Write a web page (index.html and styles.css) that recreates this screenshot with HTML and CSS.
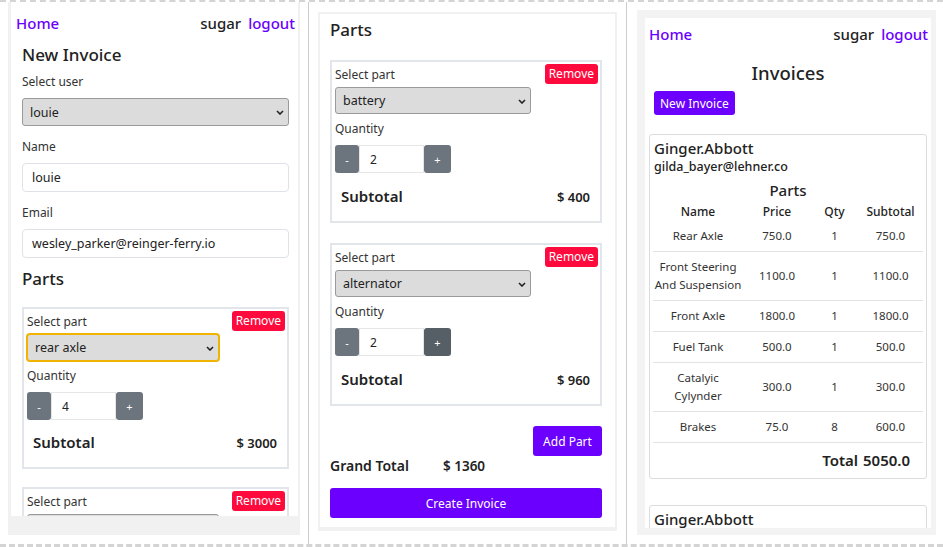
FILE: index.html
```html
<!DOCTYPE html>
<html lang="en">
<head>
<meta charset="utf-8">
<title>Invoices</title>
<link rel="stylesheet" href="styles.css">
</head>
<body>
<div class="page">

  <section class="shot shot-new">
    <div class="frame frame-new">
      <div class="screen">
        <nav class="topnav topnav-new">
          <a class="nav-link" href="#">Home</a>
          <span class="nav-user"><span class="username">sugar</span><a class="nav-link" href="#">logout</a></span>
        </nav>
        <div class="form">
          <h2 class="title">New Invoice</h2>
          <div class="field">
            <label class="field-label">Select user</label>
            <div class="select-wrap">
              <select class="select"><option>louie</option></select>
              <svg class="chevron" width="8" height="5" viewBox="0 0 8 5"><polyline points="1,1 4,4 7,1" fill="none" stroke="#222" stroke-width="1.6"/></svg>
            </div>
          </div>
          <div class="field">
            <label class="field-label">Name</label>
            <input class="text-input" value="louie">
          </div>
          <div class="field">
            <label class="field-label">Email</label>
            <input class="text-input" value="wesley_parker@reinger-ferry.io">
          </div>
          <h3 class="section-title section-title-new">Parts</h3>

          <div class="part">
            <div class="part-head"><span class="part-label">Select part</span><button class="btn-remove">Remove</button></div>
            <div class="select-wrap part-select is-focused">
              <select class="select"><option>rear axle</option></select>
              <svg class="chevron" width="8" height="5" viewBox="0 0 8 5"><polyline points="1,1 4,4 7,1" fill="none" stroke="#222" stroke-width="1.6"/></svg>
            </div>
            <span class="qty-label">Quantity</span>
            <div class="qty"><button class="qty-btn">-</button><input class="qty-input" value="4"><button class="qty-btn qty-plus">+</button></div>
            <div class="subtotal"><span class="subtotal-label">Subtotal</span><span class="subtotal-value">$ 3000</span></div>
          </div>

          <div class="part">
            <div class="part-head"><span class="part-label">Select part</span><button class="btn-remove">Remove</button></div>
            <div class="select-wrap part-select">
              <select class="select"><option>battery</option></select>
              <svg class="chevron" width="8" height="5" viewBox="0 0 8 5"><polyline points="1,1 4,4 7,1" fill="none" stroke="#222" stroke-width="1.6"/></svg>
            </div>
          </div>
        </div>
      </div>
    </div>
  </section>

  <div class="divider"></div>

  <section class="shot shot-parts">
    <div class="frame frame-parts">
      <div class="screen parts-page">
        <h3 class="section-title">Parts</h3>

        <div class="part">
          <div class="part-head"><span class="part-label">Select part</span><button class="btn-remove">Remove</button></div>
          <div class="select-wrap part-select">
            <select class="select"><option>battery</option></select>
            <svg class="chevron" width="8" height="5" viewBox="0 0 8 5"><polyline points="1,1 4,4 7,1" fill="none" stroke="#222" stroke-width="1.6"/></svg>
          </div>
          <span class="qty-label">Quantity</span>
          <div class="qty"><button class="qty-btn">-</button><input class="qty-input" value="2"><button class="qty-btn qty-plus">+</button></div>
          <div class="subtotal"><span class="subtotal-label">Subtotal</span><span class="subtotal-value">$ 400</span></div>
        </div>

        <div class="part">
          <div class="part-head"><span class="part-label">Select part</span><button class="btn-remove">Remove</button></div>
          <div class="select-wrap part-select">
            <select class="select"><option>alternator</option></select>
            <svg class="chevron" width="8" height="5" viewBox="0 0 8 5"><polyline points="1,1 4,4 7,1" fill="none" stroke="#222" stroke-width="1.6"/></svg>
          </div>
          <span class="qty-label">Quantity</span>
          <div class="qty"><button class="qty-btn">-</button><input class="qty-input" value="2"><button class="qty-btn qty-plus is-hover">+</button></div>
          <div class="subtotal"><span class="subtotal-label">Subtotal</span><span class="subtotal-value">$ 960</span></div>
        </div>

        <div class="actions"><button class="btn-primary btn-add">Add Part</button></div>
        <div class="grand"><span class="grand-label">Grand Total</span><span class="grand-value">$ 1360</span></div>
        <button class="btn-primary btn-create">Create Invoice</button>
      </div>
    </div>
  </section>

  <div class="divider"></div>

  <section class="shot shot-list">
    <div class="frame frame-list">
      <div class="screen">
        <nav class="topnav topnav-list">
          <a class="nav-link" href="#">Home</a>
          <span class="nav-user"><span class="username">sugar</span><a class="nav-link" href="#">logout</a></span>
        </nav>
        <div class="list-page">
          <h2 class="list-title">Invoices</h2>
          <button class="btn-primary btn-new">New Invoice</button>

          <article class="invoice">
            <div class="customer">Ginger.Abbott</div>
            <div class="customer-email">gilda_bayer@lehner.co</div>
            <div class="invoice-parts">Parts</div>
            <table class="parts-table">
              <colgroup><col class="col-name"><col class="col-price"><col class="col-qty"><col class="col-sub"></colgroup>
              <thead>
                <tr><th>Name</th><th>Price</th><th>Qty</th><th>Subtotal</th></tr>
              </thead>
              <tbody>
                <tr><td>Rear Axle</td><td>750.0</td><td>1</td><td>750.0</td></tr>
                <tr><td>Front Steering And Suspension</td><td>1100.0</td><td>1</td><td>1100.0</td></tr>
                <tr><td>Front Axle</td><td>1800.0</td><td>1</td><td>1800.0</td></tr>
                <tr><td>Fuel Tank</td><td>500.0</td><td>1</td><td>500.0</td></tr>
                <tr><td>Catalyic Cylynder</td><td>300.0</td><td>1</td><td>300.0</td></tr>
                <tr><td>Brakes</td><td>75.0</td><td>8</td><td>600.0</td></tr>
              </tbody>
              <tfoot>
                <tr><td class="total-label" colspan="3">Total</td><td class="total-value">5050.0</td></tr>
              </tfoot>
            </table>
          </article>

          <article class="invoice invoice-peek">
            <div class="customer">Ginger.Abbott</div>
          </article>
        </div>
      </div>
    </div>
  </section>

</div>
</body>
</html>
```
FILE: styles.css
```css
* { box-sizing: border-box; }

html, body { margin: 0; padding: 0; }

body {
  width: 943px;
  height: 547px;
  overflow: hidden;
  background: #fff;
  font-family: "Noto Sans", "DejaVu Sans", sans-serif;
  color: #212529;
}

button, input, select { font-family: inherit; margin: 0; }

.page {
  display: flex;
  height: 547px;
  border-top: 2px dashed #d4d4d4;
  border-bottom: 3px dashed #d4d4d4;
}

.shot { flex: none; height: 542px; overflow: hidden; }
.shot-new { width: 308px; padding-left: 8px; }
.shot-parts { width: 317px; padding: 10px 0 0 9px; }
.shot-list { width: 316px; padding: 8px 0 0 10px; }

.divider { flex: none; width: 1px; height: 542px; background: #cdcdcd; }

.frame { background: #f1f1f1; }
.frame-new { width: 292px; height: 533px; padding: 0 2px 19px 3px; }
.frame-parts { width: 299px; height: 519px; padding: 2px 2px 4px 2px; }
.frame-list { width: 299px; height: 525px; padding: 8px 5px 7px 8px; background: #f3f3f3; }

.screen { background: #fff; height: 100%; overflow: hidden; }

/* nav */
.topnav {
  display: flex;
  justify-content: space-between;
  align-items: center;
  height: 20px;
  font-size: 15px;
  font-weight: 500;
}
.topnav-new { margin: 11px 3px 0 5px; }
.topnav-list { margin: 6px 3px 0 4px; }
.nav-link { color: #6b00ff; text-decoration: none; }
.username { color: #222; margin-right: 7px; }

/* new invoice form */
.form { padding: 0 9px 0 11px; }
.title { margin: 10px 0 0; font-size: 17px; font-weight: 500; line-height: 24px; color: #222; }
.field { margin-top: 6px; }
.field + .field { margin-top: 12px; }
.field-label { display: block; font-size: 12px; line-height: 18px; color: #333; margin-bottom: 7px; }

.select-wrap { position: relative; }
.select {
  appearance: none;
  -webkit-appearance: none;
  display: block;
  width: 100%;
  height: 28px;
  border: 1px solid #9a9a9a;
  border-radius: 3px;
  background: #dcdcdc;
  font-size: 12.5px;
  color: #222;
  padding: 0 20px 0 7px;
}
.chevron { position: absolute; right: 5px; top: 50%; margin-top: -2px; }

.text-input {
  display: block;
  width: 100%;
  height: 29px;
  border: 1px solid #dfe2e6;
  border-radius: 4px;
  padding: 0 9px;
  font-size: 12.5px;
  color: #222;
}

.section-title { margin: 0; font-size: 17px; font-weight: 500; line-height: 22px; color: #222; }
.section-title-new { margin-top: 10px; }

/* part card */
.part {
  margin-top: 17px;
  border: 2px solid #e2e5e9;
  padding: 2px 2px 14px 3px;
}
.part + .part { margin-top: 18px; }
.part-head { display: flex; justify-content: space-between; align-items: center; height: 20px; }
.part-label { font-size: 12px; color: #333; }
.btn-remove {
  height: 20px;
  padding: 0 4px;
  border: 0;
  border-radius: 3px;
  background: #ff0a3c;
  color: #fff;
  font-size: 12px;
  line-height: 20px;
}
.part-select { width: 74.5%; margin-top: 3px; }
.part-select .select { height: 27px; }
.part-select.is-focused .select { border-color: #f0b400; box-shadow: 0 0 0 1px #f0b400; }

.qty-label { display: block; margin-top: 7px; font-size: 12px; line-height: 16px; color: #333; }
.qty { display: flex; margin-top: 8px; height: 28px; }
.qty-btn {
  width: 24px;
  height: 28px;
  border: 0;
  border-radius: 3px;
  background: #6c757d;
  color: #fff;
  font-size: 11px;
  padding: 0;
}
.qty-plus { width: 27px; }
.qty-plus.is-hover { background: #565e66; }
.qty-input {
  width: 65px;
  height: 28px;
  border: 1px solid #e6e6e6;
  padding: 0 0 0 10px;
  font-size: 12px;
  color: #222;
}

.subtotal {
  display: flex;
  justify-content: space-between;
  align-items: baseline;
  margin-top: 12px;
  padding: 0 8px 0 6px;
  line-height: 20px;
  color: #222;
}
.subtotal-label { font-size: 15px; font-weight: 600; }
.subtotal-value { font-size: 13px; font-weight: 600; }

/* parts screen */
.parts-page { padding: 5px 13px 0 10px; }
.parts-page .part { margin-top: 19px; }
.parts-page .part + .part { margin-top: 20px; }
.parts-page .subtotal { margin-top: 13px; }

.actions { display: flex; justify-content: flex-end; margin-top: 20px; }
.btn-primary {
  background: #6b00ff;
  color: #fff;
  border: 0;
  border-radius: 3px;
  font-size: 12px;
  padding: 0;
}
.btn-add { height: 30px; width: 69px; }

.grand { display: flex; gap: 34px; align-items: baseline; line-height: 20px; color: #222; }
.grand-label { font-size: 14px; font-weight: 600; }
.grand-value { font-size: 13.5px; font-weight: 600; }

.btn-create { display: block; width: 100%; height: 30px; margin-top: 12px; }

/* invoice list */
.list-page { padding: 0 4px; }
.list-title { text-align: center; margin: 17px 0 0; font-size: 18.5px; font-weight: 500; line-height: 24px; color: #222; }
.btn-new { display: block; margin: 6px 0 0 5px; height: 24px; padding: 0 6px; }

.invoice {
  border: 1px solid #dcdcdc;
  border-radius: 3px;
  margin-top: 19px;
  padding: 3px 3px 2px;
  color: #222;
}
.invoice + .invoice { margin-top: 26px; }
.invoice-peek { height: 30px; }
.customer { font-size: 15px; font-weight: 500; line-height: 20px; margin-left: 1px; }
.customer-email { font-size: 12.5px; font-weight: 500; line-height: 16px; margin-top: 1px; margin-left: 1px; }
.invoice-parts { text-align: center; font-size: 15px; font-weight: 500; line-height: 18px; margin-top: 6px; }

.parts-table {
  width: 270px;
  table-layout: fixed;
  border-collapse: collapse;
  margin-top: 4px;
  font-size: 11.5px;
  color: #333;
}
.col-name { width: 90px; }
.col-price { width: 68px; }
.col-qty { width: 47px; }
.col-sub { width: 65px; }

.parts-table th {
  font-weight: 500;
  font-size: 12px;
  line-height: 18px;
  padding: 0;
  text-align: center;
  color: #222;
}
.parts-table td {
  text-align: center;
  line-height: 18px;
  padding: 6px 0;
}
.parts-table tbody tr { border-bottom: 1px solid #e3e3e3; }
.parts-table tfoot td { font-size: 15px; font-weight: 600; line-height: 20px; padding: 7px 0 6px; color: #222; }
.parts-table .total-label { text-align: right; padding-right: 0; }
.parts-table .total-value { text-align: left; padding-left: 5px; }
```
